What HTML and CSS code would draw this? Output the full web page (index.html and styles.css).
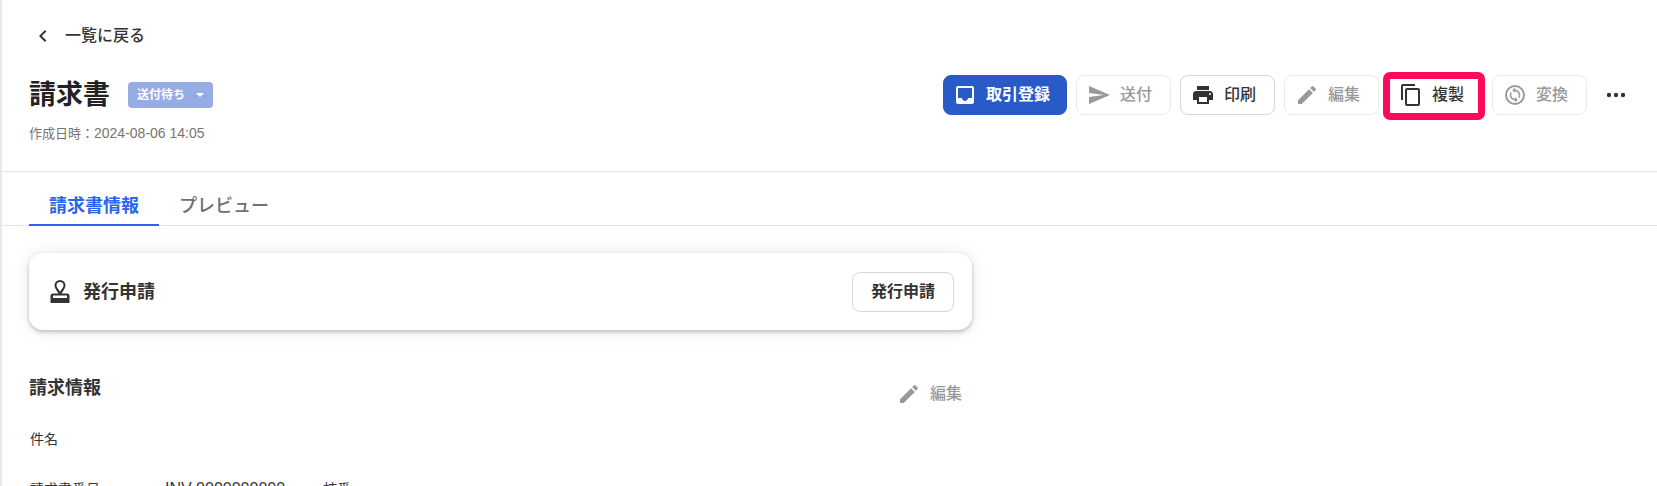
FILE: index.html
```html
<!DOCTYPE html>
<html lang="ja">
<head>
  <meta charset="UTF-8">
  <meta name="viewport" content="width=device-width, initial-scale=1.0">
  <title>請求書</title>
  <link rel="stylesheet" href="styles.css">
</head>
<body>
  <main class="page">
    <header class="page-header">
      <a href="#list" class="back">
        <svg viewBox="0 0 24 24"><path d="M15.4 7.4 14 6l-6 6 6 6 1.4-1.4-4.6-4.6z"/></svg>
        <span>一覧に戻る</span>
      </a>

      <div class="title-row">
        <div class="title">
          <h1>請求書</h1>
          <button type="button" class="status">送付待ち
            <svg viewBox="0 0 8 4"><path d="M0 0h8L4 4z"/></svg>
          </button>
        </div>
        <div class="actions">
          <button type="button" class="btn primary">
            <svg viewBox="0 0 24 24"><path d="M19 3H5a2 2 0 0 0-2 2v14a2 2 0 0 0 2 2h14a2 2 0 0 0 2-2V5a2 2 0 0 0-2-2zm0 12h-4c0 1.66-1.35 3-3 3s-3-1.34-3-3H5V5h14v10z"/></svg>
            <span>取引登録</span>
          </button>
          <button type="button" class="btn" disabled>
            <svg viewBox="0 0 24 24"><path d="M2 21 23 12 2 3v7l15 2-15 2z"/></svg>
            <span>送付</span>
          </button>
          <button type="button" class="btn">
            <svg viewBox="0 0 24 24"><path d="M19 8H5c-1.66 0-3 1.34-3 3v6h4v4h12v-4h4v-6c0-1.66-1.34-3-3-3zm-3 11H8v-5h8v5zm3-7a1 1 0 1 1 0-2 1 1 0 0 1 0 2zm-1-9H6v4h12V3z"/></svg>
            <span>印刷</span>
          </button>
          <button type="button" class="btn" disabled>
            <svg viewBox="0 0 24 24"><path d="M3 17.25V21h3.75L17.81 9.94l-3.75-3.75L3 17.25zM20.71 7.04a1 1 0 0 0 0-1.41l-2.34-2.34a1 1 0 0 0-1.41 0l-1.83 1.83 3.75 3.75 1.83-1.83z"/></svg>
            <span>編集</span>
          </button>
          <div class="highlight">
            <button type="button" class="btn">
              <svg viewBox="0 0 24 24"><path d="M16 1H4a2 2 0 0 0-2 2v14h2V3h12V1zm3 4H8a2 2 0 0 0-2 2v14a2 2 0 0 0 2 2h11a2 2 0 0 0 2-2V7a2 2 0 0 0-2-2zm0 16H8V7h11v14z"/></svg>
              <span>複製</span>
            </button>
          </div>
          <button type="button" class="btn" disabled>
            <svg viewBox="0 0 24 24"><path fill-rule="evenodd" d="M12 2a10 10 0 1 0 0 20 10 10 0 0 0 0-20zm0 18a8 8 0 1 1 0-16 8 8 0 0 1 0 16z"/><path d="M12 6v-1.500L9.300 7.200 12 9.900V8.200A3.800 3.800 0 0 1 15.200 14l1.100 1.100A5.300 5.300 0 0 0 17.300 12 5.500 5.500 0 0 0 12 6.500zM8.800 10 7.700 8.900A5.300 5.300 0 0 0 6.700 12 5.500 5.500 0 0 0 12 17.500v2L14.700 16.800 12 14.100v1.700A3.800 3.800 0 0 1 8.800 10z"/></svg>
            <span>変換</span>
          </button>
          <button type="button" class="more" aria-label="その他">
            <svg viewBox="0 0 24 24"><circle cx="5" cy="12" r="2.200"/><circle cx="12" cy="12" r="2.200"/><circle cx="19" cy="12" r="2.200"/></svg>
          </button>
        </div>
      </div>

      <p class="created">作成日時：<time datetime="2024-08-06T14:05">2024-08-06 14:05</time></p>
    </header>

    <nav class="tabs">
      <a href="#info" class="active">請求書情報</a>
      <a href="#preview">プレビュー</a>
    </nav>

    <div class="content">
      <section class="card">
        <svg viewBox="0 0 24 24"><path fill-rule="evenodd" d="M12 0a5.500 5.500 0 0 0-5.500 5.500c0 2.500 2 4.500 4 8H5a2.500 2.500 0 0 0-2.500 2.500v7h19v-7a2.500 2.500 0 0 0-2.500-2.500h-5.500c2-3.500 4-5.500 4-8A5.500 5.500 0 0 0 12 0zm0 2a3.500 3.500 0 0 1 3.500 3.500c0 1.800-1.700 3.300-3.500 6.200-1.800-2.900-3.500-4.400-3.500-6.200A3.500 3.500 0 0 1 12 2zM5 15.500h14V18H5z"/></svg>
        <h2>発行申請</h2>
        <button type="button" class="btn apply">発行申請</button>
      </section>

      <section class="info" id="info">
        <div class="info-head">
          <h2>請求情報</h2>
          <button type="button" class="edit" disabled>
            <svg viewBox="0 0 24 24"><path d="M3 17.25V21h3.75L17.81 9.94l-3.75-3.75L3 17.25zM20.71 7.04a1 1 0 0 0 0-1.41l-2.34-2.34a1 1 0 0 0-1.41 0l-1.83 1.83 3.75 3.75 1.83-1.83z"/></svg>
            <span>編集</span>
          </button>
        </div>
        <dl>
          <div class="field">
            <dt>件名</dt>
            <dd></dd>
          </div>
          <div class="field">
            <dt>請求書番号</dt>
            <dd>INV-0000000000</dd>
            <dt>枝番</dt>
            <dd></dd>
          </div>
        </dl>
      </section>
    </div>
  </main>
</body>
</html>
```
FILE: styles.css
```css
* { box-sizing: border-box; }
body {
  margin: 0;
  background: #fff;
  color: #333;
  font-family: "Liberation Sans", "Noto Sans CJK JP", sans-serif;
  font-size: 16px;
  line-height: 24px;
}
h1, h2, p, dl, dd { margin: 0; }
a { text-decoration: none; color: inherit; }
button { font: inherit; color: inherit; cursor: pointer; }
button:disabled { cursor: default; }
svg {
  width: 24px;
  height: 24px;
  flex: none;
  fill: currentColor;
}
.page {
  min-height: 100vh;
  border-left: 2px solid #e8e8e8;
}

/* header */
.page-header {
  padding: 24px 29px 25px 27px;
  border-bottom: 1px solid #e5e5e5;
}
.back {
  display: inline-flex;
  align-items: center;
  gap: 10px;
  padding-left: 2px;
  font-weight: 500;
}
.title-row {
  display: flex;
  justify-content: space-between;
  align-items: center;
  margin-top: 20px;
}
.title {
  display: flex;
  align-items: center;
  gap: 18px;
}
h1 {
  font-size: 27px;
  line-height: 40px;
  color: #222;
}
.status {
  display: flex;
  align-items: center;
  gap: 11px;
  height: 26px;
  padding: 0 9px;
  border: none;
  border-radius: 4px;
  background: #95ace5;
  color: #fff;
  font-size: 12px;
  font-weight: bold;
}
.status svg { width: 8px; height: 4px; }
.actions {
  display: flex;
  align-items: center;
  gap: 9px;
}
.btn {
  display: flex;
  align-items: center;
  gap: 9px;
  height: 40px;
  padding: 0 18px 0 10px;
  border: 1px solid #d6d6d6;
  border-radius: 8px;
  background: #fff;
  color: #333;
  font-weight: 500;
  white-space: nowrap;
}
.btn:disabled {
  border-color: #ebebeb;
  color: #999;
}
.btn.primary {
  padding: 0 16px 0 9px;
  border-color: #285ac8;
  background: #285ac8;
  color: #fff;
  font-weight: bold;
}
.highlight { position: relative; }
.highlight::after {
  content: "";
  position: absolute;
  inset: -3px -2px -5px -5px;
  border: 7px solid #ff0a5a;
  border-radius: 7px;
  pointer-events: none;
}
.more {
  display: flex;
  margin-left: 8px;
  padding: 0;
  border: none;
  background: none;
}
.created {
  margin-top: 6px;
  color: #77756e;
  font-size: 13px;
}
.created time { font-size: 14px; }

/* tabs */
.tabs {
  display: flex;
  padding-left: 27px;
  border-bottom: 1px solid #e5e5e5;
}
.tabs a {
  margin-bottom: -1px;
  padding: 22px 20px 6px;
  border-bottom: 2px solid transparent;
  color: #707070;
  font-size: 18px;
  font-weight: 500;
}
.tabs .active {
  border-color: #2864f0;
  color: #2864f0;
  font-weight: bold;
}

/* content */
.content {
  max-width: 997px;
  padding: 27px 27px 0;
}
.card {
  display: flex;
  align-items: center;
  gap: 11px;
  min-height: 77px;
  padding: 18px 18px 18px 19px;
  border-radius: 14px;
  box-shadow: 0 0 20px rgba(0, 0, 0, 0.08), 0 2px 4px rgba(0, 0, 0, 0.24);
}
h2 {
  font-size: 18px;
  line-height: 24px;
}
.apply {
  margin-left: auto;
  padding: 0 18px;
  font-weight: bold;
}
.info { margin-top: 46px; }
.info-head {
  display: flex;
  justify-content: space-between;
  align-items: flex-start;
}
.edit {
  display: flex;
  align-items: center;
  gap: 9px;
  margin-top: 6px;
  padding: 0 10px 0 0;
  border: none;
  background: none;
  color: #999;
  font-weight: 500;
}
dl {
  margin-top: 8px;
  padding-left: 1px;
}
.field {
  display: flex;
  align-items: baseline;
  height: 50px;
  padding-top: 13px;
}
dt {
  width: 135px;
  font-size: 14px;
}
dd { width: 158px; }
```
